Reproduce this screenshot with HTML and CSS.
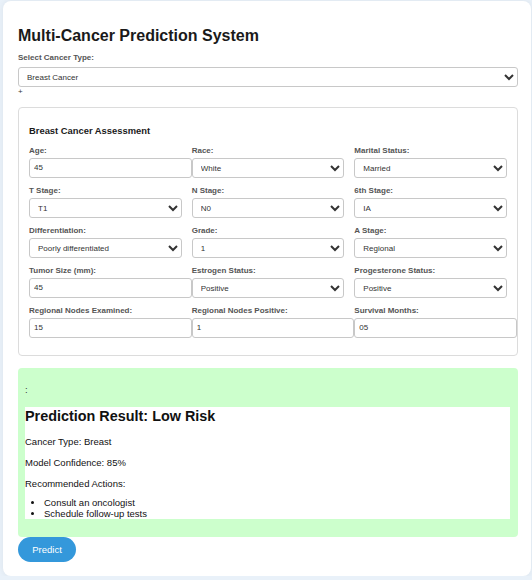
FILE: index.html
```html
<!DOCTYPE html>
<html lang="en">
<head>
<meta charset="utf-8">
<title>Multi-Cancer Prediction System</title>
<link rel="stylesheet" href="styles.css">
</head>
<body>
<div class="card">
  <h1 class="title">Multi-Cancer Prediction System</h1>
  <label class="lbl">Select Cancer Type:</label>
  <select class="ctl sel wide">
    <option>Breast Cancer</option>
  </select>
  <div class="plus">+</div>

  <div class="assess">
    <h3 class="assess-title">Breast Cancer Assessment</h3>
    <div class="grid">
      <div class="field"><label class="lbl">Age:</label><input class="ctl txt" type="text" value="45"></div>
      <div class="field"><label class="lbl">Race:</label><select class="ctl sel"><option>White</option></select></div>
      <div class="field"><label class="lbl">Marital Status:</label><select class="ctl sel"><option>Married</option></select></div>

      <div class="field"><label class="lbl">T Stage:</label><select class="ctl sel"><option>T1</option></select></div>
      <div class="field"><label class="lbl">N Stage:</label><select class="ctl sel"><option>N0</option></select></div>
      <div class="field"><label class="lbl">6th Stage:</label><select class="ctl sel"><option>IA</option></select></div>

      <div class="field"><label class="lbl">Differentiation:</label><select class="ctl sel"><option>Poorly differentiated</option></select></div>
      <div class="field"><label class="lbl">Grade:</label><select class="ctl sel"><option>1</option></select></div>
      <div class="field"><label class="lbl">A Stage:</label><select class="ctl sel"><option>Regional</option></select></div>

      <div class="field"><label class="lbl">Tumor Size (mm):</label><input class="ctl txt" type="text" value="45"></div>
      <div class="field"><label class="lbl">Estrogen Status:</label><select class="ctl sel"><option>Positive</option></select></div>
      <div class="field"><label class="lbl">Progesterone Status:</label><select class="ctl sel"><option>Positive</option></select></div>

      <div class="field"><label class="lbl">Regional Nodes Examined:</label><input class="ctl txt" type="text" value="15"></div>
      <div class="field"><label class="lbl">Regional Nodes Positive:</label><input class="ctl txt" type="text" value="1"></div>
      <div class="field"><label class="lbl">Survival Months:</label><input class="ctl txt" type="text" value="05"></div>
    </div>
  </div>

  <div class="result">
    <p class="colon">:</p>
    <div class="result-inner">
      <h3 class="result-title">Prediction Result: Low Risk</h3>
      <p class="rp first">Cancer Type: Breast</p>
      <p class="rp">Model Confidence: 85%</p>
      <p class="rp">Recommended Actions:</p>
      <ul class="actions">
        <li>Consult an oncologist</li>
        <li>Schedule follow-up tests</li>
      </ul>
    </div>
  </div>
  <button class="predict">Predict</button>
</div>
</body>
</html>
```
FILE: styles.css
```css
html, body {
  margin: 0;
  padding: 0;
}
body {
  background: #e9f1f9;
  font-family: "Liberation Sans", Arial, sans-serif;
  color: #333;
  overflow: hidden;
}
.card {
  box-sizing: border-box;
  width: 528px;
  margin: 1px 0 0 3px;
  padding: 15px 13px 14px 15px;
  background: #fff;
  border-radius: 8px;
  box-shadow: 0 0 6px rgba(0, 0, 0, 0.06);
}
.title {
  font-size: 16px;
  line-height: 21px;
  font-weight: bold;
  color: #1a1a1a;
  margin: 9px 0 7px;
}
.lbl {
  display: block;
  font-size: 8px;
  line-height: 10px;
  font-weight: bold;
  color: #555;
  margin-bottom: 4px;
}
.field .lbl {
  margin-bottom: 2px;
}
.ctl {
  display: block;
  height: 20px;
  margin: 0;
  font-family: "Liberation Sans", Arial, sans-serif;
  font-size: 8px;
  color: #333;
  border: 1px solid #c8c8c8;
  border-radius: 3px;
  background: #fff;
}
.txt {
  box-sizing: content-box;
  width: 100%;
  height: 10px;
  padding: 4px;
  line-height: 10px;
}
.sel {
  box-sizing: border-box;
  width: 100%;
  padding: 0 4px;
}
.wide {
  width: 500px;
}
.plus {
  font-size: 8px;
  line-height: 10px;
  height: 10px;
  color: #333;
}
.assess {
  margin-top: 10px;
  width: 500px;
  box-sizing: border-box;
  border: 1px solid #dcdcdc;
  border-radius: 4px;
  padding: 10px 10px 9px;
}
.assess-title {
  font-size: 9.4px;
  line-height: 12px;
  font-weight: bold;
  color: #1a1a1a;
  margin: 7px 0 9px;
}
.grid {
  display: grid;
  grid-template-columns: repeat(3, 1fr);
  column-gap: 10px;
}
.field {
  min-width: 0;
  margin-bottom: 8px;
}
.result {
  margin-top: 12px;
  width: 500px;
  box-sizing: border-box;
  background: #ccffcc;
  border-radius: 4px;
  padding: 7px 8px 7px 7px;
}
.colon {
  margin: 9px 0 0;
  font-size: 9.5px;
  line-height: 11px;
  color: #333;
}
.result-inner {
  background: #fff;
  margin: 12px 0 11px;
  color: #111;
}
.result-title {
  margin: 0;
  padding-top: 1px;
  font-size: 14.4px;
  line-height: 17px;
  font-weight: bold;
  color: #111;
}
.rp {
  margin: 10px 0 0;
  font-size: 9.5px;
  line-height: 11px;
}
.rp.first {
  margin-top: 10.5px;
}
.actions {
  margin: 8px 0 0;
  padding-left: 19px;
  font-size: 9.5px;
  line-height: 11px;
}
.predict {
  display: block;
  background: #3498db;
  color: #fff;
  border: none;
  border-radius: 13px;
  font-family: "Liberation Sans", Arial, sans-serif;
  font-size: 9.5px;
  line-height: 11px;
  padding: 7px 14px;
  height: 25px;
  width: 58px;
}
```
